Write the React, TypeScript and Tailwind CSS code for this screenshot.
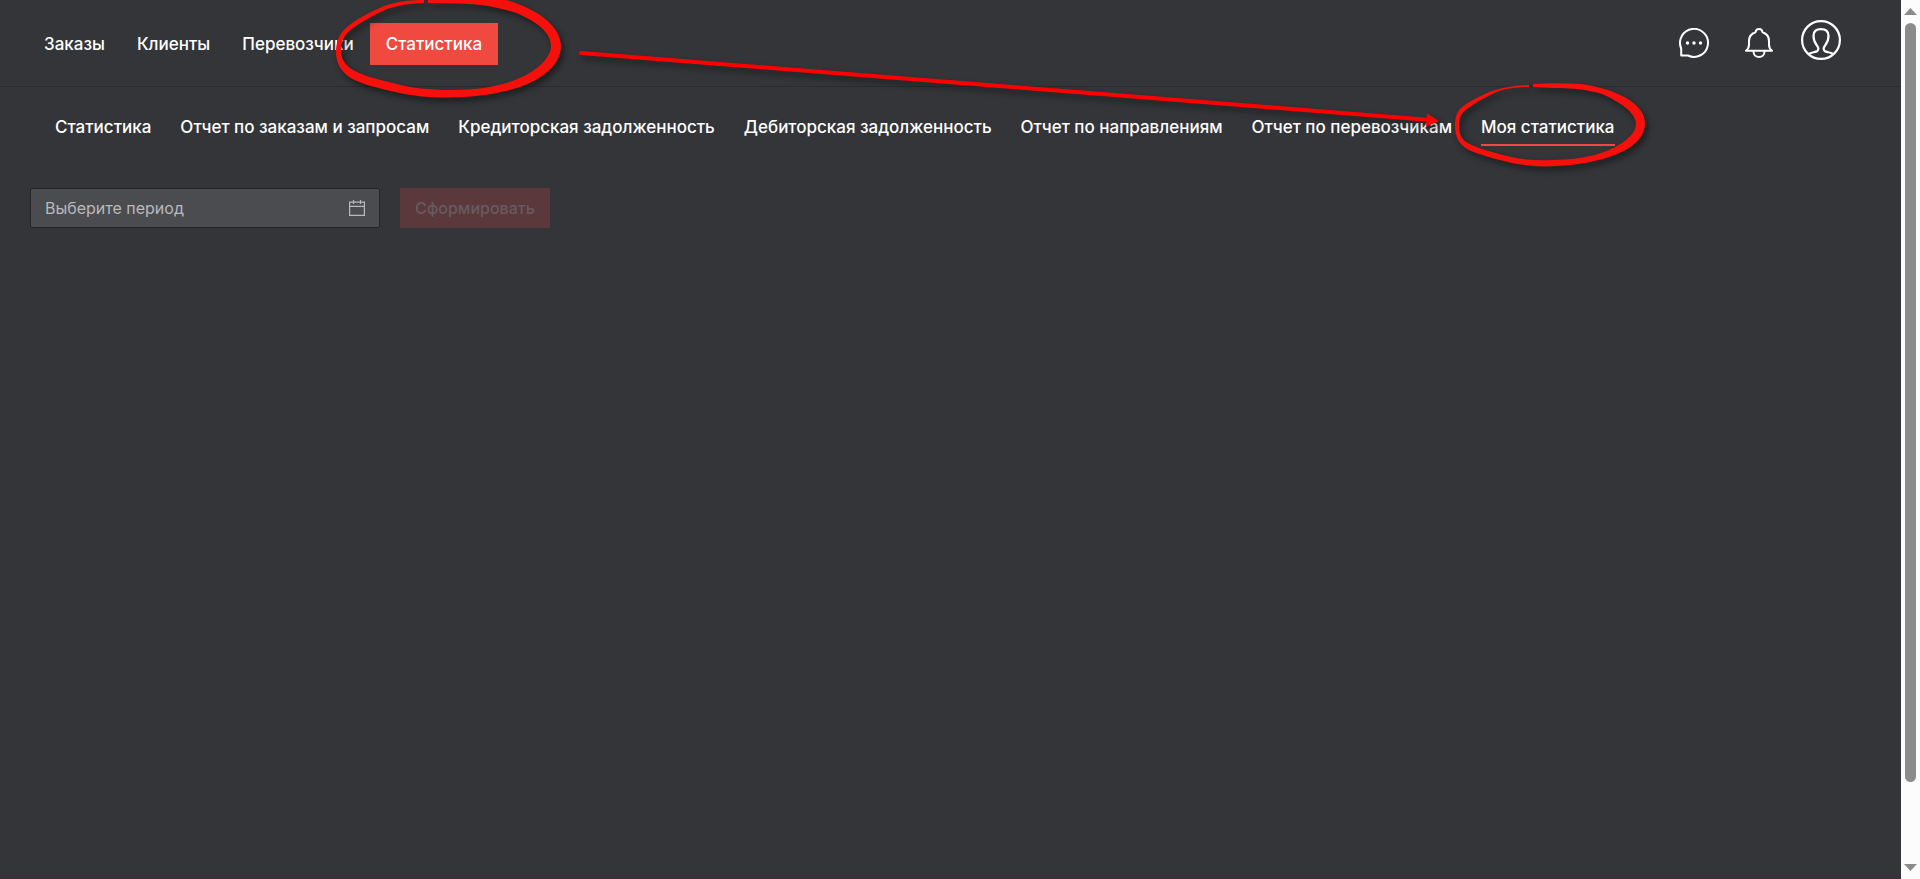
import { useState } from "react";

const sections = ["Заказы", "Клиенты", "Перевозчики", "Статистика"];

const reports = [
  "Статистика",
  "Отчет по заказам и запросам",
  "Кредиторская задолженность",
  "Дебиторская задолженность",
  "Отчет по направлениям",
  "Отчет по перевозчикам",
  "Моя статистика",
];

function ChatIcon() {
  return (
    <svg width="30" height="30" viewBox="0 0 30 30" fill="none" stroke="white" strokeWidth="2" strokeLinejoin="round">
      <path d="M2.200 20.500A14 14 0 1 1 9 27.500H2.200Z" />
      <g fill="white" stroke="none">
        <circle cx="8.500" cy="15" r="1.700" />
        <circle cx="15" cy="15" r="1.700" />
        <circle cx="21.500" cy="15" r="1.700" />
      </g>
    </svg>
  );
}

function BellIcon() {
  return (
    <svg width="30" height="30" viewBox="0 0 30 30" fill="none" stroke="white" strokeWidth="2" strokeLinejoin="round" strokeLinecap="round">
      <path d="M2 22.800C4 21.200 5 19.500 5 16.500V13C5 9 7.500 5.500 11.500 4.200C11.800 2.200 13 1 15 1S18.200 2.200 18.500 4.200C22.500 5.500 25 9 25 13V16.500C25 19.500 26 21.200 28 22.800Z" />
      <path d="M9.500 23.500C9.500 27 12 29 15 29S20.500 27 20.500 23.500" />
    </svg>
  );
}

function UserIcon() {
  return (
    <svg width="40" height="40" viewBox="0 0 40 40" fill="none" stroke="white" strokeWidth="2.200" strokeLinejoin="round">
      <circle cx="20" cy="20" r="18.900" />
      <path d="M7.500 34.200C10.500 32 14.500 32.500 16.500 30.800C18 29.300 17.200 27 15.600 25C13.500 22 12.300 19 12.500 15.500C12.700 11.500 15.500 9.200 20 9.200S27.300 11.500 27.500 15.500C27.700 19 26.500 22 24.400 25C22.800 27 22 29.300 23.500 30.800C25.500 32.500 29.500 32 32.500 34.200" />
    </svg>
  );
}

function CalendarIcon() {
  return (
    <svg width="16" height="16" viewBox="0 0 16 16" fill="none" stroke="#b9b9bb" strokeWidth="1.200">
      <path d="M0.600 2.200H15.400V15.400H0.600ZM0.600 6.400H15.400M4.500 0V4M11.500 0V4" />
    </svg>
  );
}

function Marks() {
  return (
    <svg
      aria-hidden="true"
      className="pointer-events-none absolute top-0 left-0 drop-shadow-[3px_4px_3px_rgba(0,0,0,0.45)]"
      width="1660"
      height="180"
      viewBox="0 0 1660 180"
    >
      <g fill="#f6100b" fillRule="evenodd">
        <path d="M424 0C408 0 396 2 384 6C370 12 352 21 343 31C338 37 336 44 336 52C336 62 340 70 349 77C360 84 378 88 395 92C413 96 430 98 450 97.500C475 97 498 94 520 87C540 80 561 66 561 46C561 30 545 15 523 6C512 1 502 -1 490 -4L428 -2V3L458 3.500C480 4 497 7 513 12C533 19 551 31 551 46C551 59 534 73 515 80C497 87 475 90 450 90C430 90 410 88 393 83C376 79 360 75 350 68C343 62 341 57 341 50C341 40 345 34 353 28C363 21 376 14 387 9C399 5 411 3 424 3Z" />
        <path d="M1529 85C1514 85 1501 88 1489 92C1478 97 1466 103 1460 109C1456 114 1455 119 1455 126C1455 137 1459 144 1467 149C1479 155 1496 159 1512 163C1528 166 1541 167 1557 166C1579 165 1600 161 1617 154C1632 148 1645 138 1645 123C1645 110 1632 100 1618 94C1607 89 1595 86 1581 84C1565 83 1549 83 1533 84V87L1555 88C1573 88 1589 90 1602 94C1618 101 1636 112 1636 124C1636 135 1621 145 1607 151C1591 157 1572 160 1551 160C1534 161 1518 159 1503 155C1488 151 1474 147 1466 142C1461 138 1459 133 1459 125C1459 116 1463 111 1470 107C1478 101 1490 95 1499 91C1508 88 1518 87 1529 87Z" />
      </g>
      <path d="M581 53L1430 120" stroke="#ff0000" strokeWidth="4" strokeLinecap="round" />
      <path d="M1427 113.500L1439 121L1426 126.500Z" fill="#ff0000" />
    </svg>
  );
}

function ScrollBar() {
  return (
    <div aria-hidden="true" className="flex w-[19px] shrink-0 flex-col items-center justify-between bg-[#fcfcfc] py-2">
      <svg width="13" height="7" viewBox="0 0 13 7" fill="#8b8b8b">
        <path d="M0 7L6.500 0L13 7Z" />
      </svg>
      <div className="mt-2 mb-[82px] w-[11px] grow rounded-full bg-[#8b8b8b]" />
      <svg width="13" height="7" viewBox="0 0 13 7" fill="#8b8b8b">
        <path d="M0 0L6.500 7L13 0Z" />
      </svg>
    </div>
  );
}

export default function App() {
  const [period, setPeriod] = useState("");

  return (
    <div className="relative flex min-h-screen bg-[#343538] font-['Inter','Liberation_Sans',sans-serif] text-white">
      <div className="flex min-w-0 grow flex-col border-b-3 border-[#392f38]">
        <header className="flex h-[87px] items-center justify-between border-b border-[#2b2b2e] pr-[60px] pl-7">
          <nav className="mt-0.5 flex text-[17px] font-medium">
            {sections.map((name) => (
              <a
                key={name}
                href="#"
                className={
                  name === "Статистика"
                    ? "bg-[#f04a40] px-4 py-[7px] leading-7"
                    : "px-4 py-[7px] leading-7"
                }
              >
                {name}
              </a>
            ))}
          </nav>
          <div className="flex items-center gap-[35px]">
            <button type="button" aria-label="Сообщения"><ChatIcon /></button>
            <button type="button" aria-label="Уведомления"><BellIcon /></button>
            <button type="button" aria-label="Профиль" className="-ml-2 pb-1.5"><UserIcon /></button>
          </div>
        </header>

        <nav className="flex gap-[29px] px-[55px] pt-5 text-[17px] font-medium">
          {reports.map((name) => (
            <a
              key={name}
              href="#"
              className={
                name === "Моя статистика"
                  ? "border-b-2 border-[#f04a40] pt-1.5 pb-[3px] leading-7"
                  : "border-b-2 border-transparent pt-1.5 pb-[3px] leading-7"
              }
            >
              {name}
            </a>
          ))}
        </nav>

        <form className="flex gap-5 px-[30px] pt-[42px]" onSubmit={(e) => e.preventDefault()}>
          <label className="flex h-10 w-[350px] items-center rounded-xs border border-[#242527] bg-[#4b4c4f] px-3.5">
            <input
              type="text"
              aria-label="Период"
              placeholder="Выберите период"
              value={period}
              onChange={(e) => setPeriod(e.target.value)}
              className="min-w-0 grow bg-transparent text-base outline-none placeholder:text-[#b9b9bb]"
            />
            <CalendarIcon />
          </label>
          <button type="submit" disabled={!period} className="h-10 bg-[#f04a40] px-[15px] text-base font-medium disabled:bg-[#5b383b] disabled:text-[#675b5e]">
            Сформировать
          </button>
        </form>
      </div>
      <ScrollBar />
      <Marks />
    </div>
  );
}
